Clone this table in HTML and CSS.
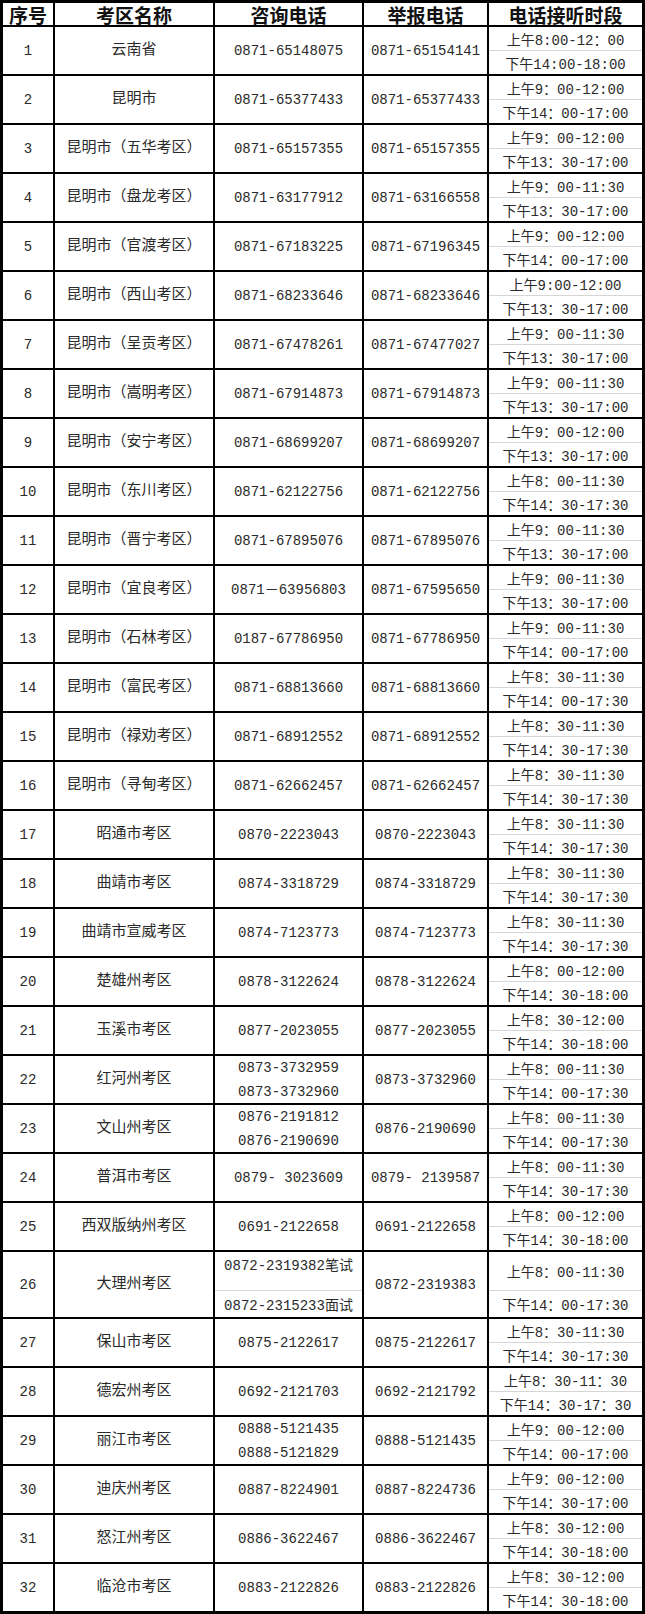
FILE: index.html
```html
<!DOCTYPE html>
<html lang="zh-CN">
<head>
<meta charset="utf-8">
<title>云南省考区咨询电话</title>
<link rel="stylesheet" href="styles.css">
</head>
<body>
<div class="sheet">
  <div class="hd">序号</div><div class="hd">考区名称</div><div class="hd">咨询电话</div><div class="hd">举报电话</div><div class="hd">电话接听时段</div>

  <div class="c">1</div><div class="c nm">云南省</div><div class="c">0871-65148075</div><div class="c">0871-65154141</div><div class="tm"><div class="am">上午8:00-12：00</div><div class="pm">下午14:00-18:00</div></div>
  <div class="c">2</div><div class="c nm">昆明市</div><div class="c">0871-65377433</div><div class="c">0871-65377433</div><div class="tm"><div class="am">上午9：00-12:00</div><div class="pm">下午14：00-17:00</div></div>
  <div class="c">3</div><div class="c nm">昆明市（五华考区）</div><div class="c">0871-65157355</div><div class="c">0871-65157355</div><div class="tm"><div class="am">上午9：00-12:00</div><div class="pm">下午13：30-17:00</div></div>
  <div class="c">4</div><div class="c nm">昆明市（盘龙考区）</div><div class="c">0871-63177912</div><div class="c">0871-63166558</div><div class="tm"><div class="am">上午9：00-11:30</div><div class="pm">下午13：30-17:00</div></div>
  <div class="c">5</div><div class="c nm">昆明市（官渡考区）</div><div class="c">0871-67183225</div><div class="c">0871-67196345</div><div class="tm"><div class="am">上午9：00-12:00</div><div class="pm">下午14：00-17:00</div></div>
  <div class="c">6</div><div class="c nm">昆明市（西山考区）</div><div class="c">0871-68233646</div><div class="c">0871-68233646</div><div class="tm"><div class="am">上午9:00-12:00</div><div class="pm">下午13：30-17:00</div></div>
  <div class="c">7</div><div class="c nm">昆明市（呈贡考区）</div><div class="c">0871-67478261</div><div class="c">0871-67477027</div><div class="tm"><div class="am">上午9：00-11:30</div><div class="pm">下午13：30-17:00</div></div>
  <div class="c">8</div><div class="c nm">昆明市（嵩明考区）</div><div class="c">0871-67914873</div><div class="c">0871-67914873</div><div class="tm"><div class="am">上午9：00-11:30</div><div class="pm">下午13：30-17:00</div></div>
  <div class="c">9</div><div class="c nm">昆明市（安宁考区）</div><div class="c">0871-68699207</div><div class="c">0871-68699207</div><div class="tm"><div class="am">上午9：00-12:00</div><div class="pm">下午13：30-17:00</div></div>
  <div class="c">10</div><div class="c nm">昆明市（东川考区）</div><div class="c">0871-62122756</div><div class="c">0871-62122756</div><div class="tm"><div class="am">上午8：00-11:30</div><div class="pm">下午14：30-17:30</div></div>
  <div class="c">11</div><div class="c nm">昆明市（晋宁考区）</div><div class="c">0871-67895076</div><div class="c">0871-67895076</div><div class="tm"><div class="am">上午9：00-11:30</div><div class="pm">下午13：30-17:00</div></div>
  <div class="c">12</div><div class="c nm">昆明市（宜良考区）</div><div class="c">0871－63956803</div><div class="c">0871-67595650</div><div class="tm"><div class="am">上午9：00-11:30</div><div class="pm">下午13：30-17:00</div></div>
  <div class="c">13</div><div class="c nm">昆明市（石林考区）</div><div class="c">0187-67786950</div><div class="c">0871-67786950</div><div class="tm"><div class="am">上午9：00-11:30</div><div class="pm">下午14：00-17:00</div></div>
  <div class="c">14</div><div class="c nm">昆明市（富民考区）</div><div class="c">0871-68813660</div><div class="c">0871-68813660</div><div class="tm"><div class="am">上午8：30-11:30</div><div class="pm">下午14：00-17:30</div></div>
  <div class="c">15</div><div class="c nm">昆明市（禄劝考区）</div><div class="c">0871-68912552</div><div class="c">0871-68912552</div><div class="tm"><div class="am">上午8：30-11:30</div><div class="pm">下午14：30-17:30</div></div>
  <div class="c">16</div><div class="c nm">昆明市（寻甸考区）</div><div class="c">0871-62662457</div><div class="c">0871-62662457</div><div class="tm"><div class="am">上午8：30-11:30</div><div class="pm">下午14：30-17:30</div></div>
  <div class="c">17</div><div class="c nm">昭通市考区</div><div class="c">0870-2223043</div><div class="c">0870-2223043</div><div class="tm"><div class="am">上午8：30-11:30</div><div class="pm">下午14：30-17:30</div></div>
  <div class="c">18</div><div class="c nm">曲靖市考区</div><div class="c">0874-3318729</div><div class="c">0874-3318729</div><div class="tm"><div class="am">上午8：30-11:30</div><div class="pm">下午14：30-17:30</div></div>
  <div class="c">19</div><div class="c nm">曲靖市宣威考区</div><div class="c">0874-7123773</div><div class="c">0874-7123773</div><div class="tm"><div class="am">上午8：30-11:30</div><div class="pm">下午14：30-17:30</div></div>
  <div class="c">20</div><div class="c nm">楚雄州考区</div><div class="c">0878-3122624</div><div class="c">0878-3122624</div><div class="tm"><div class="am">上午8：00-12:00</div><div class="pm">下午14：30-18:00</div></div>
  <div class="c">21</div><div class="c nm">玉溪市考区</div><div class="c">0877-2023055</div><div class="c">0877-2023055</div><div class="tm"><div class="am">上午8：30-12:00</div><div class="pm">下午14：30-18:00</div></div>
  <div class="c">22</div><div class="c nm">红河州考区</div><div class="c">0873-3732959<br>0873-3732960</div><div class="c">0873-3732960</div><div class="tm"><div class="am">上午8：00-11:30</div><div class="pm">下午14：00-17:30</div></div>
  <div class="c">23</div><div class="c nm">文山州考区</div><div class="c">0876-2191812<br>0876-2190690</div><div class="c">0876-2190690</div><div class="tm"><div class="am">上午8：00-11:30</div><div class="pm">下午14：00-17:30</div></div>
  <div class="c">24</div><div class="c nm">普洱市考区</div><div class="c">0879- 3023609</div><div class="c">0879- 2139587</div><div class="tm"><div class="am">上午8：00-11:30</div><div class="pm">下午14：30-17:30</div></div>
  <div class="c">25</div><div class="c nm">西双版纳州考区</div><div class="c">0691-2122658</div><div class="c">0691-2122658</div><div class="tm"><div class="am">上午8：00-12:00</div><div class="pm">下午14：30-18:00</div></div>
  <div class="c">26</div><div class="c nm">大理州考区</div><div class="tm"><div class="am top">0872-2319382笔试</div><div class="pm short">0872-2315233面试</div></div><div class="c">0872-2319383</div><div class="tm"><div class="am">上午8：00-11:30</div><div class="pm short">下午14：00-17:30</div></div>
  <div class="c">27</div><div class="c nm">保山市考区</div><div class="c">0875-2122617</div><div class="c">0875-2122617</div><div class="tm"><div class="am">上午8：30-11:30</div><div class="pm">下午14：30-17:30</div></div>
  <div class="c">28</div><div class="c nm">德宏州考区</div><div class="c">0692-2121703</div><div class="c">0692-2121792</div><div class="tm"><div class="am">上午8：30-11：30</div><div class="pm">下午14：30-17：30</div></div>
  <div class="c">29</div><div class="c nm">丽江市考区</div><div class="c">0888-5121435<br>0888-5121829</div><div class="c">0888-5121435</div><div class="tm"><div class="am">上午9：00-12:00</div><div class="pm">下午14：00-17:00</div></div>
  <div class="c">30</div><div class="c nm">迪庆州考区</div><div class="c">0887-8224901</div><div class="c">0887-8224736</div><div class="tm"><div class="am">上午9：00-12:00</div><div class="pm">下午14：30-17:00</div></div>
  <div class="c">31</div><div class="c nm">怒江州考区</div><div class="c">0886-3622467</div><div class="c">0886-3622467</div><div class="tm"><div class="am">上午8：30-12:00</div><div class="pm">下午14：30-18:00</div></div>
  <div class="c">32</div><div class="c nm">临沧市考区</div><div class="c">0883-2122826</div><div class="c">0883-2122826</div><div class="tm"><div class="am">上午8：30-12:00</div><div class="pm">下午14：30-18:00</div></div>
</div>
</body>
</html>
```

FILE: styles.css
```css
html, body {
  margin: 0;
  padding: 0;
  background: #ffffff;
}

.sheet {
  width: 645px;
  box-sizing: border-box;
  display: grid;
  grid-template-columns: 50px 158px 147px 123px 153px;
  grid-template-rows: 22px repeat(25, 47px) 65px repeat(6, 47px);
  gap: 2px;
  padding: 3px;
  background: #000000;
  font-family: "Liberation Mono", "Noto Sans CJK SC", monospace;
  font-size: 14px;
  color: #2a2a2a;
}

.hd {
  background: #ffffff;
  display: flex;
  align-items: center;
  justify-content: center;
  font-family: "Noto Sans CJK SC", sans-serif;
  font-weight: 700;
  font-size: 19px;
  line-height: 1;
  color: #111111;
}

.c {
  background: #ffffff;
  display: flex;
  align-items: center;
  justify-content: center;
  text-align: center;
  line-height: 24px;
  white-space: nowrap;
}

.c.nm {
  font-size: 15px;
}

.tm {
  background: #ffffff;
  display: flex;
  flex-direction: column;
}

.tm .am,
.tm .pm {
  flex: 1 1 0;
  display: flex;
  align-items: center;
  justify-content: center;
  white-space: nowrap;
}

.tm .am {
  border-bottom: 1px solid #d6d6d6;
}

.tm .am.top {
  align-items: flex-start;
  padding-top: 2px;
}

.tm .pm.short {
  flex: 0 0 26px;
}
```
